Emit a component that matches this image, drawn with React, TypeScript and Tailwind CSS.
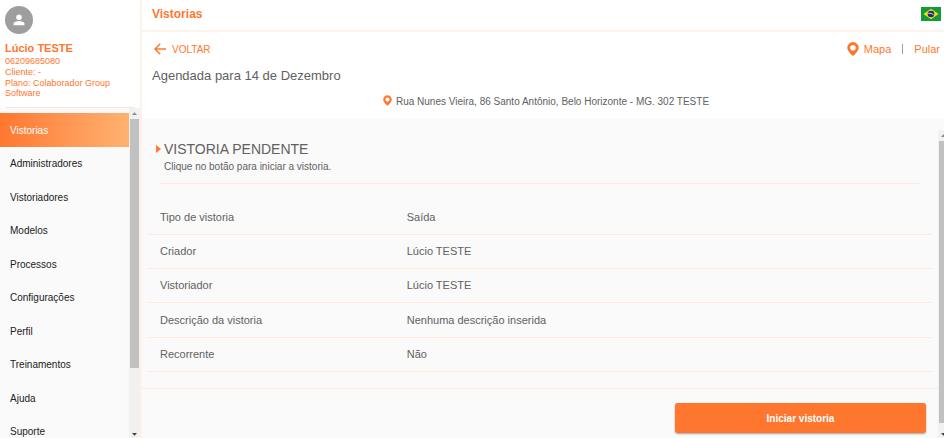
import type { ReactNode } from "react";

const menuItems = [
  "Vistorias",
  "Administradores",
  "Vistoriadores",
  "Modelos",
  "Processos",
  "Configurações",
  "Perfil",
  "Treinamentos",
  "Ajuda",
  "Suporte",
];

const details = [
  { label: "Tipo de vistoria", value: "Saída" },
  { label: "Criador", value: "Lúcio TESTE" },
  { label: "Vistoriador", value: "Lúcio TESTE" },
  { label: "Descrição da vistoria", value: "Nenhuma descrição inserida" },
  { label: "Recorrente", value: "Não" },
];

function PinIcon({ className }: { className?: string }) {
  return (
    <svg viewBox="0 0 12 14" fill="#ff772e" className={className} aria-hidden="true">
      <path
        fillRule="evenodd"
        d="M6 0a5.700 5.700 0 0 0-5.700 5.700C.3 9.400 6 14 6 14s5.700-4.600 5.700-8.300A5.700 5.700 0 0 0 6 0Zm0 2.900a2.800 2.800 0 1 1 0 5.600 2.800 2.800 0 0 1 0-5.600Z"
      />
    </svg>
  );
}

function AvatarIcon() {
  return (
    <div className="flex size-7 items-center justify-center rounded-full bg-[#9e9e9e]">
      <svg viewBox="0 0 12 12" fill="#fff" className="size-3" aria-hidden="true">
        <circle cx="6" cy="3.300" r="2.800" />
        <path d="M.6 11.200V9.600C.6 7.800 4.200 6.900 6 6.900s5.400.900 5.400 2.700v1.600Z" />
      </svg>
    </div>
  );
}

function BrazilFlag() {
  return (
    <svg viewBox="0 0 20 14" className="h-3.5 w-5" role="img" aria-label="Português">
      <path fill="#109c38" d="M0 0h20v14H0z" />
      <path fill="#f8d81c" d="m10 1.700 7.600 5.300-7.600 5.300L2.400 7Z" />
      <circle cx="10" cy="7" r="3.300" fill="#20306f" />
      <path d="M7.200 6.300c2-.200 4 .300 5.500 1.500" fill="none" stroke="#fff" strokeWidth=".8" />
    </svg>
  );
}

function ScrollBar({ thumb }: { thumb: string }) {
  return (
    <div aria-hidden="true" className="flex w-[11px] shrink-0 flex-col items-center bg-[#f1f1f1]">
      <svg viewBox="0 0 11 11" className="h-[11px] w-[11px] shrink-0">
        <path d="M3 7h5L5.500 4.300Z" fill="#8b8b8b" />
      </svg>
      <div className={`w-[9px] bg-[#c1c1c1] ${thumb}`} />
      <svg viewBox="0 0 11 11" className="mt-auto h-[11px] w-[11px] shrink-0">
        <path d="M3 6h5L5.500 8.700Z" fill="#404040" />
      </svg>
    </div>
  );
}

function ActionButton({ children }: { children: ReactNode }) {
  return (
    <button type="button" className="flex items-center gap-[5px] text-[11px] leading-4">
      {children}
    </button>
  );
}

function Sidebar() {
  return (
    <aside className="flex w-[142px] shrink-0 flex-col border-r-2 border-[#fff1eb]">
      <div className="mx-[5px] h-[108px] shrink-0 border-b border-[#ffe4d8] pt-1.5 text-[#ff772e]">
        <AvatarIcon />
        <p className="mt-[7px] text-[11px] leading-[14px] font-bold">Lúcio TESTE</p>
        <div className="mt-px text-[9px] leading-[11px]">
          <p>06209685080</p>
          <p>Cliente: -</p>
          <p className="leading-[10px]">Plano: Colaborador Group Software</p>
        </div>
      </div>
      <div className="flex min-h-0 flex-1 bg-[#fafafa]">
        <nav className="min-w-0 flex-1 overflow-hidden pt-[5px]">
          <ul className="grid h-[335px] auto-rows-fr text-[10px] text-[#212121]">
            {menuItems.map((item, i) => (
              <li key={item}>
                <a
                  href="#"
                  aria-current={i === 0 ? "page" : undefined}
                  className={
                    i === 0
                      ? "flex h-full items-center bg-linear-to-r from-[#ff772e] to-[#ffb170] pt-px pl-2.5 text-white"
                      : "flex h-full items-center pt-px pl-2.5"
                  }
                >
                  {item}
                </a>
              </li>
            ))}
          </ul>
        </nav>
        <ScrollBar thumb="h-[249px]" />
      </div>
    </aside>
  );
}

export default function App() {
  return (
    <div className="flex h-screen overflow-hidden bg-white font-['Liberation_Sans',Arial,sans-serif] text-[#616161]">
      <Sidebar />
      <main className="flex min-w-0 flex-1 flex-col">
        <header className="flex h-8 shrink-0 items-center justify-between border-b-2 border-[#fff1eb] pr-[3px] pb-[3px] pl-2.5">
          <h1 className="text-[12px] leading-4 font-bold text-[#ff772e]">Vistorias</h1>
          <BrazilFlag />
        </header>

        <section className="h-[86px] shrink-0 pr-1 pl-2.5">
          <div className="flex h-[34px] items-center justify-between text-[#ff772e]">
            <button type="button" className="flex items-center gap-1.5 text-[10px]">
              <svg viewBox="0 0 12 12" className="ml-0.5 size-3" fill="none" stroke="#ff772e" strokeWidth="1.500" aria-hidden="true">
                <path d="M12 6H1M6.200.800 1 6l5.200 5.200" />
              </svg>
              VOLTAR
            </button>
            <div className="flex items-center">
              <ActionButton>
                <PinIcon className="h-3.5 w-3" />
                Mapa
              </ActionButton>
              <span className="mx-[11px] h-2.5 w-px bg-[#9e9e9e]" />
              <ActionButton>Pular</ActionButton>
            </div>
          </div>
          <p className="mt-0.5 text-[13px] leading-4">Agendada para 14 de Dezembro</p>
          <p className="mt-2.5 flex items-center justify-center gap-1 text-[10px] leading-4">
            <PinIcon className="mb-[3px] h-[11px] w-[9px]" />
            Rua Nunes Vieira, 86 Santo Antônio, Belo Horizonte - MG. 302 TESTE
          </p>
        </section>

        <section className="flex min-h-0 flex-1 bg-[#fafafa]">
          <div className="flex min-w-0 flex-1 flex-col">
            <div className="mx-[18px] flex h-[66px] shrink-0 flex-col border-b border-[#ffe9df] pt-[22px]">
              <div className="-ml-1 flex items-center gap-[3px]">
                <svg viewBox="0 0 5 8" className="h-2 w-[5px]" fill="#ff772e" aria-hidden="true">
                  <path d="M0 0v8l5-4Z" />
                </svg>
                <h2 className="text-[14px] leading-[18px]">VISTORIA PENDENTE</h2>
              </div>
              <p className="pl-1 text-[10px] leading-[17px]">Clique no botão para iniciar a vistoria.</p>
            </div>
            <div className="mt-[17px] px-1.5">
              <table className="h-[171px] w-full table-fixed border-collapse text-left text-[11px]">
                <tbody>
                  {details.map((row) => (
                    <tr key={row.label} className="border-b border-[#ffe9df]">
                      <th scope="row" className="w-[33%] pl-3 font-normal">
                        {row.label}
                      </th>
                      <td>{row.value}</td>
                    </tr>
                  ))}
                </tbody>
              </table>
            </div>
            <footer className="mt-auto flex h-[50px] shrink-0 items-start justify-end border-t border-[#ffe9df] pt-3.5 pr-3">
              <button
                type="button"
                className="h-[30px] w-[251px] rounded-[3px] bg-[#ff772e] text-[10px] font-bold text-white shadow-[0_1px_2px_rgba(0,0,0,0.35)]"
              >
                Iniciar vistoria
              </button>
            </footer>
          </div>
          <div className="mt-3 flex w-1.5 shrink-0 overflow-hidden">
            <ScrollBar thumb="h-[282px]" />
          </div>
        </section>
      </main>
    </div>
  );
}
